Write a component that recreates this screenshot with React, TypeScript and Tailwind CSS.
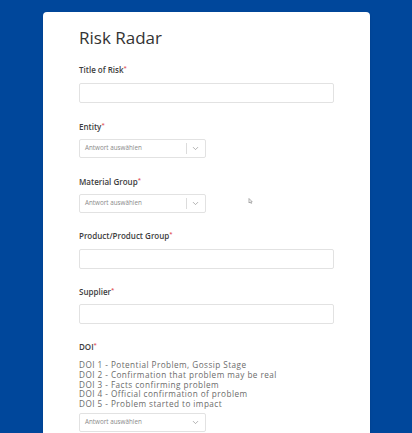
import { ChevronDown } from "lucide-react";

function Label({ text, className }: { text: string; className: string }) {
  return (
    <div className={`flex h-[12px] items-center text-[8px] leading-[12px] font-semibold text-[#3d3d3d] ${className}`}>
      <span>{text}</span>
      <span className="-mt-[5px] text-[6px] leading-none text-[#e0464b]">*</span>
    </div>
  );
}

function TextInput({ className }: { className: string }) {
  return <div className={`h-[20px] w-[255px] rounded-[2px] border border-[#e2e2e2] bg-white ${className}`}></div>;
}

function Select({ className, divider = true }: { className: string; divider?: boolean }) {
  return (
    <div
      className={`flex h-[19px] w-[127px] items-center rounded-[2px] border border-[#e2e2e2] bg-white pl-[5px] pr-[4px] ${className}`}
    >
      <span className="flex-1 text-[6.3px] leading-none text-[#8a8a8a]">Antwort auswählen</span>
      {divider && <div className="mr-[4px] h-[11px] w-px bg-[#dcdcdc]"></div>}
      <ChevronDown className="mr-[1px] h-[9px] w-[9px] text-[#9a9a9a]" strokeWidth={2} />
    </div>
  );
}

const doiLines = [
  "DOI 1 - Potential Problem, Gossip Stage",
  "DOI 2 - Confirmation that problem may be real",
  "DOI 3 - Facts confirming problem",
  "DOI 4 - Official confirmation of problem",
  "DOI 5 - Problem started to impact",
];

export default function App() {
  return (
    <div className="h-[433px] w-[412px] overflow-hidden bg-[#00479b] pt-[12px] font-['Open_Sans',sans-serif]">
      <div className="ml-[43px] h-[440px] w-[327px] rounded-[4px] bg-white pl-[36px] pt-[15px] shadow-sm">
        <h1 className="h-[22px] text-[17px] leading-[22px] font-medium tracking-[0px] text-[#333]">Risk Radar</h1>

        <Label text="Title of Risk" className="mt-[15px]" />
        <TextInput className="mt-[7px]" />

        <Label text="Entity" className="mt-[18px]" />
        <Select className="mt-[6px]" />

        <div className="relative">
          <Label text="Material Group" className="mt-[18px]" />
          <Select className="mt-[6px]" />
          <svg
            className="absolute left-[169px] top-[22px] h-[6px] w-[5px]"
            viewBox="0 0 5 6"
            fill="none"
            stroke="#9a9a9a"
            strokeWidth="0.8"
          >
            <path d="M1 0.5 V5 L2 4 L3 5.5 L3.6 5.2 L2.8 3.8 H4.2 Z" />
          </svg>
        </div>

        <Label text="Product/Product Group" className="mt-[17px]" />
        <TextInput className="mt-[7px]" />

        <Label text="Supplier" className="mt-[17px]" />
        <TextInput className="mt-[6px]" />

        <Label text="DOI" className="mt-[17px]" />
        <div className="mt-[7px] text-[8.2px] leading-[9.8px] tracking-[0.45px] text-[#6b6b6b]">
          {doiLines.map((line) => (
            <div key={line} className="h-[9.8px]">
              {line}
            </div>
          ))}
        </div>
        <Select className="mt-[4px]" divider={false} />
      </div>
    </div>
  );
}
